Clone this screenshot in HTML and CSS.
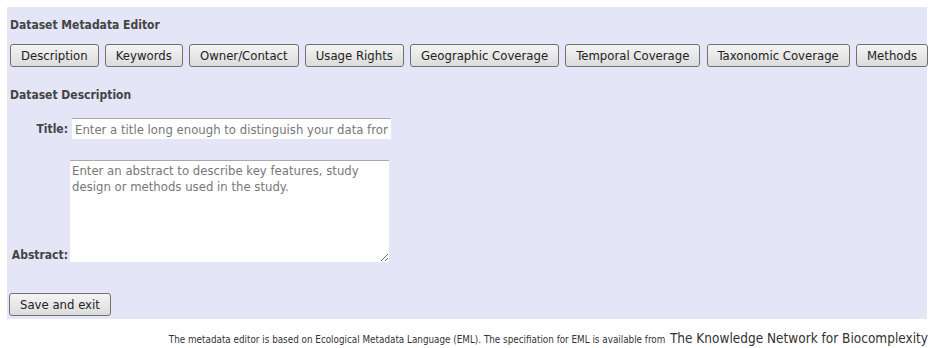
FILE: index.html
```html
<!DOCTYPE html>
<html>
<head>
<meta charset="utf-8" />
<title>Dataset Metadata Editor</title>
<link rel="stylesheet" href="styles.css">
</head>
<body>
	<div id="editor">
		<h1>Dataset Metadata Editor</h1>
		<div class="tabs">
			<button class="btn">Description</button>
			<button class="btn">Keywords</button>
			<button class="btn">Owner/Contact</button>
			<button class="btn">Usage Rights</button>
			<button class="btn">Geographic Coverage</button>
			<button class="btn">Temporal Coverage</button>
			<button class="btn">Taxonomic Coverage</button>
			<button class="btn">Methods</button>
		</div>
		<h2>Dataset Description</h2>
		<div class="fields">
			<label class="lbl lbl_title">Title:</label>
			<input class="txt" type="text" placeholder="Enter a title long enough to distinguish your data from other datasets" />
			<label class="lbl lbl_abstract">Abstract:</label>
			<textarea class="area" placeholder="Enter an abstract to describe key features, study design or methods used in the study."></textarea>
		</div>
		<button class="btn btn_save">Save and exit</button>
	</div>
	<p class="foot">
		<span class="foot_small">The metadata editor is based on Ecological Metadata Language (EML). The specifiation for EML is available from</span>
		<a href="#">The Knowledge Network for Biocomplexity</a>
	</p>
</body>
</html>
```

FILE: styles.css
```css
*{ padding:0; margin:0; box-sizing:border-box; }
body{ margin:0; font-family:"DejaVu Sans Condensed", "Liberation Sans", sans-serif; color:#333; }
#editor{ background:#e5e5f8; margin:7px 5px 0 7px; padding:10px 2px 3px 3px; }
h1, h2{ font-size:12px; line-height:16px; font-weight:bold; color:#444; }
h1{ margin-bottom:11px; }
h2{ margin:20px 0 15px; }
.tabs{ display:flex; gap:6.2px; }
.btn{ flex:none; white-space:nowrap; font-family:inherit; font-size:13px; color:#222; height:23px; padding:0 10px; border:1px solid #707070; border-radius:3px; background:linear-gradient(#f4f4f4, #dcdcdc); }
.fields{ display:grid; grid-template-columns:58px 322px; column-gap:2px; row-gap:21px; }
.lbl{ font-size:12px; font-weight:bold; color:#444; text-align:right; }
.lbl_title{ align-self:center; }
.lbl_abstract{ align-self:end; line-height:14px; }
.txt{ font-family:inherit; font-size:13px; height:21px; width:319px; margin-left:2px; border:none; border-top:1px solid #aaa; padding:0 3px; background:#fff; }
.area{ font-family:inherit; font-size:13px; height:102px; width:319px; border:none; border-top:1px solid #aaa; padding:2px 2px; background:#fff; resize:both; line-height:16px; }
.txt::placeholder, .area::placeholder{ color:#777; }
.btn_save{ margin:31px 0 0 -1px; padding:0 10px; }
.foot{ text-align:right; margin:9px 4px 0 0; color:#333; line-height:20px; }
.foot_small{ font-size:9.8px; }
.foot a{ font-size:13.5px; color:#333; text-decoration:none; }
```
